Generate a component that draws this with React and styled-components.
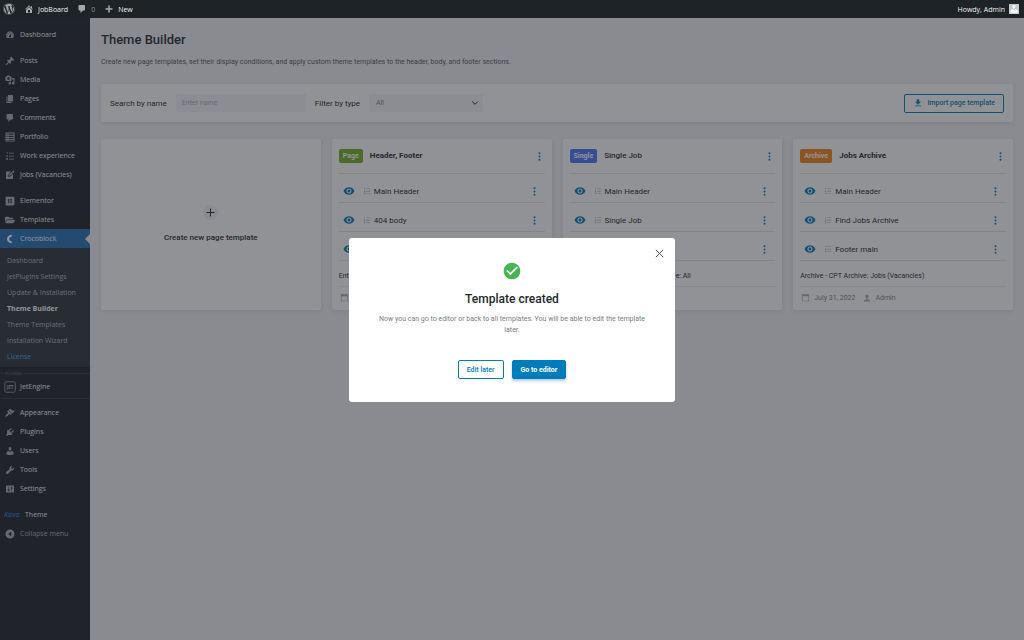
import React from "react";
import styled, { createGlobalStyle, css } from "styled-components";
import { FaWordpress, FaElementor, FaFolderOpen } from "react-icons/fa";
import { MdDownload, MdCheckCircle, MdRemoveRedEye } from "react-icons/md";

const GlobalStyle = createGlobalStyle`
  * {
    box-sizing: border-box;
  }
  body {
    margin: 0;
    background: #f0f0f3;
    color: #23282d;
    font-family: Roboto, "Liberation Sans", sans-serif;
    font-size: 8px;
  }
  button, input, select {
    font-family: inherit;
    margin: 0;
  }
  h1, h2, p, ul {
    margin: 0;
    padding: 0;
  }
  a {
    color: inherit;
    text-decoration: none;
  }
`;

const adminFont = `"Open Sans", "Noto Sans", sans-serif`;

const icons = {
  dashboard:
    "M3.76 16h12.48c1.1-1.37 1.76-3.11 1.76-5 0-4.42-3.58-8-8-8s-8 3.58-8 8c0 1.89.66 3.63 1.76 5zM10 4c.55 0 1 .45 1 1s-.45 1-1 1-1-.45-1-1 .45-1 1-1zM6 6c.55 0 1 .45 1 1s-.45 1-1 1-1-.45-1-1 .45-1 1-1zm8 0c.55 0 1 .45 1 1s-.45 1-1 1-1-.45-1-1 .45-1 1-1zm-5.37 5.55L12 7v6c0 1.1-.9 2-2 2s-2-.9-2-2c0-.57.24-1.08.63-1.45zM4 10c.55 0 1 .45 1 1s-.45 1-1 1-1-.45-1-1 .45-1 1-1zm12 0c.55 0 1 .45 1 1s-.45 1-1 1-1-.45-1-1 .45-1 1-1z",
  home:
    "M16 8.5l1.53 1.53-1.06 1.06L10 4.6l-6.47 6.49-1.06-1.06L10 2.5l4 4v-2h2v4zm-6-2.46l6 5.99V18H4v-5.97zM12 17v-5H8v5h4z",
  plus: "M17 8.5v3h-5.5V17h-3v-5.5H3v-3h5.5V3h3v5.5z",
  posts:
    "M10.44 3.02l1.82-1.82 6.36 6.35-1.83 1.82c-1.05-.68-2.48-.57-3.41.36l-.75.75c-.92.93-1.04 2.35-.35 3.41l-1.83 1.82-2.41-2.41-2.8 2.79c-.42.42-3.38 2.71-3.8 2.29s1.86-3.39 2.28-3.81l2.79-2.79L4.1 9.36l1.83-1.82c1.05.69 2.48.57 3.4-.36l.75-.75c.93-.92 1.05-2.35.36-3.41z",
  media:
    "M13 11V4c0-.55-.45-1-1-1h-1.67L9 1H5L3.67 3H2c-.55 0-1 .45-1 1v7c0 .55.45 1 1 1h10c.55 0 1-.45 1-1zM7 4.5c1.38 0 2.5 1.12 2.5 2.5S8.38 9.5 7 9.5 4.5 8.38 4.5 7 5.62 4.5 7 4.5zM14 6h5v10.5c0 1.38-1.12 2.5-2.5 2.5S14 17.88 14 16.5s1.12-2.5 2.5-2.5c.17 0 .34.02.5.05V9h-3V6zm-4 8.05V13h2v3.5c0 1.38-1.12 2.5-2.5 2.5S7 17.88 7 16.5 8.12 14 9.5 14c.17 0 .34.02.5.05z",
  pages: "M6 15V2h10v13H6zm-1 1h8v2H3V5h2v11z",
  comments:
    "M5 2h9c1.1 0 2 .9 2 2v7c0 1.1-.9 2-2 2h-2l-5 5v-5H5c-1.1 0-2-.9-2-2V4c0-1.1.9-2 2-2z",
  portfolio:
    "M1 1h18v18H1zM3 3v2.5h2V3zm4 0v2.5h10V3zM3 7.5V10h2V7.5zm4 0V10h10V7.5zM3 12v2h2v-2zm4 0v2h10v-2zM3 16v1.5h2V16zm4 0v1.5h10V16z",
  list:
    "M3 2h2v4H4V3H3zM2.5 8h3v2L4 11.500h1.500v1h-3v-1l1.700-1.700V9H2.500zM2.500 14h3v4h-3v-1h2v-.6H3v-.8h1.500V15h-2zM8 3.500h10V5H8zM8 9.500h10V11H8zM8 15.500h10V17H8z",
  jobs:
    "M2 3h10l-5 6-1 5 5-1.500L16 8v10H2zM13.500 3.500L17 1l2 2.500-3 3zM12.700 4.300l2.500 2.500L10.500 11 7.800 12l.8-2.800z",
  appearance:
    "M14.48 11.06L7.41 3.99l1.5-1.5c.5-.56 2.3-.47 3.51.32 1.21.8 1.43 1.28 2.91 2.1 1.18.64 2.45 1.26 4.45.85zm-.71.71L6.7 4.7 4.93 6.47c-.39.39-.39 1.02 0 1.41l1.06 1.06c.39.39.39 1.03 0 1.42-.6.6-1.43 1.11-2.21 1.69-.35.26-.7.53-1.01.84C1.43 14.23.4 16.08 1.4 17.07c.99 1 2.84-.03 4.18-1.36.31-.31.58-.66.85-1.02.57-.78 1.08-1.61 1.69-2.21.39-.39 1.02-.39 1.41 0l1.06 1.06c.39.39 1.02.39 1.41 0z",
  plugins:
    "M13.11 4.36L9.87 7.6 8 5.73l3.24-3.24c.35-.34 1.05-.2 1.56.32.52.51.66 1.21.31 1.55zm-8 1.77l.91-1.12 9.01 9.01-1.19.84c-.71.71-2.63 1.16-3.82 1.16H6.14L4.9 17.26c-.59.59-1.54.59-2.12 0-.59-.58-.59-1.53 0-2.12l1.24-1.24v-3.88c0-1.13.4-3.19 1.09-3.89zm7.26 3.97l3.24-3.24c.34-.35 1.04-.21 1.55.31.52.51.66 1.21.31 1.55l-3.24 3.25z",
  users:
    "M10 9.25c-2.27 0-2.73-3.44-2.73-3.44C7 4.02 7.82 2 9.97 2c2.16 0 2.98 2.02 2.71 3.81 0 0-.41 3.44-2.68 3.44zm0 2.57L12.72 10c2.39 0 4.52 2.33 4.52 4.53v2.49s-3.65 1.13-7.24 1.13c-3.65 0-7.24-1.13-7.24-1.13v-2.49c0-2.25 1.94-4.48 4.47-4.48z",
  tools:
    "M16.68 9.77c-1.34 1.34-3.3 1.67-4.95.99l-5.41 6.52c-.99.99-2.59.99-3.58 0s-.99-2.59 0-3.57l6.52-5.42c-.68-1.65-.35-3.61.99-4.95 1.28-1.28 3.12-1.62 4.72-1.06l-2.89 2.89 2.82 2.82 2.86-2.87c.53 1.58.18 3.39-1.08 4.65z",
  settings:
    "M18 16V4c0-.55-.45-1-1-1H3c-.55 0-1 .45-1 1v12c0 .55.45 1 1 1h14c.55 0 1-.45 1-1zM8 11h1c.55 0 1 .45 1 1s-.45 1-1 1H8v1.5c0 .28-.22.5-.5.5s-.5-.22-.5-.5V13H6c-.55 0-1-.45-1-1s.45-1 1-1h1V5.5c0-.28.22-.5.5-.5s.5.22.5.5V11zm5-2h-1c-.55 0-1-.45-1-1s.45-1 1-1h1V5.5c0-.28.22-.5.5-.5s.5.22.5.5V7h1c.55 0 1 .45 1 1s-.45 1-1 1h-1v5.5c0 .28-.22.5-.5.5s-.5-.22-.5-.5V9z",
  collapse: "M10 1a9 9 0 1 0 0 18 9 9 0 0 0 0-18zM12.5 5v10L6.5 10z",
  croco:
    "M14.5 1.5C8 1.5 4 5 4 10s4 8.5 10.5 8.5l-1.5-4c-3-.3-4.5-2-4.5-4.500s1.500-4.200 4.500-4.500z",
  calendar: "M2 3h3V1.5h1.5V3h7V1.5H15V3h3v15.5H2zM3.5 7v10h13V7z",
  person: "M10 10a4 4 0 1 0 0-8.5 4 4 0 0 0 0 8.5zM8 10.5h4v4h5.5v4h-15v-4H8z"
};

const Icon = ({ name, size = 10 }) => (
  <svg width={size} height={size} viewBox="0 0 20 20" aria-hidden="true">
    <path fill="currentColor" fillRule="evenodd" d={icons[name]} />
  </svg>
);

const AdminBar = styled.header`
  position: sticky;
  top: 0;
  z-index: 20;
  display: flex;
  align-items: center;
  height: 18px;
  padding: 0 5px 0 3px;
  background: #1d2327;
  color: #f0f0f1;
  font-family: ${adminFont};
  font-size: 7px;
  font-weight: 500;
`;

const BarLink = styled.a`
  display: flex;
  align-items: center;
  gap: 4px;
  margin-right: 9px;
  color: ${p => (p.$dim ? "#8c9196" : "inherit")};

  svg {
    color: #a7aaad;
  }
`;

const Account = styled.a`
  display: flex;
  align-items: center;
  gap: 4px;
  margin-left: auto;
`;

const Avatar = styled.span`
  display: flex;
  width: 10px;
  height: 10px;
  background: #c6c9cc;
  color: #fff;
`;

const Layout = styled.div`
  display: flex;
  min-height: calc(100vh - 18px);
`;

const Sidebar = styled.nav`
  flex: 0 0 90px;
  padding-top: 7px;
  background: #1d2327;
  color: #f0f0f1;
  font-family: ${adminFont};
  font-size: 7px;
`;

const MenuGroup = styled.ul`
  list-style: none;
  margin-bottom: ${p => (p.$flush ? 0 : 7)}px;
`;

const MenuLink = styled.a`
  display: flex;
  align-items: center;
  gap: ${p => (p.$logo ? 4 : 5)}px;
  height: 19px;
  padding-left: ${p => (p.$logo ? 4 : 5)}px;
  font-weight: 500;
  white-space: nowrap;
  color: ${p => (p.$dim ? "#a7aaad" : "inherit")};

  svg {
    flex: none;
    color: #a7aaad;
  }

  ${p =>
    p.$active &&
    css`
      position: relative;
      background: #2271b1;
      color: #fff;

      svg {
        color: #fff;
      }

      &::after {
        content: "";
        position: absolute;
        right: 0;
        border: 5px solid transparent;
        border-right-color: #f0f0f3;
        border-left-width: 0;
      }
    `}
`;

const SubMenu = styled.ul`
  list-style: none;
  padding: 4px 0 3px;
  background: #2c3338;
`;

const SubLink = styled.a`
  display: flex;
  align-items: center;
  height: 16px;
  padding-left: 7px;
  white-space: nowrap;
  color: ${p => (p.$accent ? "#4aa3f0" : p.$current ? "#fff" : "#b4b7ba")};
  font-weight: ${p => (p.$current ? 700 : 400)};
`;

const PluginGroup = styled(MenuGroup)`
  position: relative;
  margin-top: 6px;
  margin-bottom: 4px;
  padding: 3px 0 2px;
  border-top: 1px solid #32393f;
  border-bottom: 1px solid #32393f;
`;

const GroupTag = styled.span`
  position: absolute;
  top: -3px;
  left: 4px;
  padding: 0 1px;
  background: #1d2327;
  color: #72777c;
  font-size: 4px;
  line-height: 5px;
  text-transform: uppercase;
`;

const KavaLogo = styled.span`
  width: 17px;
  color: #2271d1;
  font-style: italic;
  font-weight: 600;
`;

const Main = styled.main`
  flex: 1;
  min-width: 0;
  padding: 14px 11px;
`;

const PageTitle = styled.h1`
  font-size: 13px;
  line-height: 16px;
  font-weight: 500;
`;

const Description = styled.p`
  margin-top: 9px;
  font-size: 7px;
  line-height: 10px;
  color: #50575e;
`;

const Panel = styled.section`
  background: #fff;
  border-radius: 2px;
  box-shadow: 0 1px 4px rgba(35, 40, 45, 0.1);
`;

const Filters = styled(Panel)`
  display: flex;
  align-items: center;
  gap: 9px;
  height: 38px;
  margin: 17px 0;
  padding: 0 9px;
`;

const TextInput = styled.input`
  width: 130px;
  height: 18px;
  padding: 0 6px;
  border: 0;
  border-radius: 2px;
  background: #f4f4f6;
  font-size: 7px;

  &::placeholder {
    color: #a9adb5;
  }
`;

const SelectWrap = styled.div`
  position: relative;
  display: flex;
  align-items: center;

  svg {
    position: absolute;
    right: 4px;
    pointer-events: none;
  }
`;

const Select = styled.select`
  appearance: none;
  width: 114px;
  height: 18px;
  padding: 0 7px;
  border: 0;
  border-radius: 2px;
  background: #f4f4f6;
  color: #7b7e81;
  font-size: 7px;
`;

const Button = styled.button`
  display: inline-flex;
  align-items: center;
  justify-content: center;
  gap: 4px;
  height: 19px;
  padding: 0 8px;
  border: 1px solid #007cba;
  border-radius: 2px;
  background: ${p => (p.$primary ? "#007cba" : "#fff")};
  color: ${p => (p.$primary ? "#fff" : "#007cba")};
  font-size: 7px;
  font-weight: ${p => (p.$primary ? 700 : 500)};
  ${p => p.$primary && "box-shadow: 0 2px 3px rgba(0, 80, 130, 0.3);"}
`;

const ImportButton = styled(Button)`
  margin-left: auto;
`;

const Grid = styled.div`
  display: grid;
  grid-template-columns: repeat(4, 1fr);
  gap: 11px;
`;

const CreateCard = styled.button`
  display: flex;
  flex-direction: column;
  align-items: center;
  justify-content: center;
  gap: 13px;
  padding: 0 0 3px;
  border: 0;
  border-radius: 2px;
  background: #fff;
  box-shadow: 0 1px 4px rgba(35, 40, 45, 0.1);
  color: #23282d;
  font-size: 8px;
  font-weight: 500;
`;

const PlusCircle = styled.span`
  display: flex;
  align-items: center;
  justify-content: center;
  width: 15px;
  height: 15px;
  border-radius: 50%;
  background: #f0f0f3;
`;

const Card = styled(Panel)`
  padding: 0 7px;
`;

const CardHead = styled.div`
  display: flex;
  align-items: center;
  gap: 7px;
  height: 35px;
  padding-right: 4px;
  border-bottom: 1px solid #e2e4e8;
`;

const Badge = styled.span`
  height: 14px;
  padding: 0 4px;
  border-radius: 2px;
  background: ${p => p.color};
  color: #fff;
  font-size: 7px;
  line-height: 14px;
  font-weight: 700;
`;

const CardTitle = styled.h2`
  font-size: 8px;
  line-height: 12px;
  font-weight: ${p => (p.$light ? 500 : 700)};
`;

const Row = styled.div`
  display: flex;
  align-items: center;
  height: 29px;
  padding: 6px 9px 0 4px;
  border-bottom: 1px solid #e2e4e8;
`;

const RowName = styled.span`
  display: flex;
  align-items: center;
  gap: 3px;
  margin-left: 8px;

  svg {
    color: #a7aaad;
  }
`;

const IconButton = styled.button`
  display: flex;
  padding: 0;
  border: 0;
  background: none;
  color: ${p => p.color || "#007cba"};
  ${p => p.$end && "margin-left: auto;"}
`;

const Conditions = styled.p`
  height: 26px;
  padding-top: 10px;
  border-bottom: 1px solid #e9eaed;
  font-size: 7px;
  line-height: 10px;
  white-space: nowrap;
`;

const Meta = styled.div`
  display: flex;
  align-items: center;
  gap: 4px;
  height: 23px;
  padding: 0 0 2px 1px;
  color: #7b7e81;
  font-size: 7px;

  span {
    margin-right: 4px;
  }
  svg {
    color: #a7aaad;
  }
`;

const Overlay = styled.div`
  position: fixed;
  inset: 0;
  z-index: 10;
  display: flex;
  align-items: center;
  justify-content: center;
  background: rgba(35, 38, 45, 0.5);
`;

const Modal = styled.div`
  position: relative;
  width: 326px;
  padding: 23px 24px;
  border-radius: 3px;
  background: #fff;
  text-align: center;
`;

const ModalIcon = styled.div`
  display: flex;
  justify-content: center;
  color: #46b450;
`;

const ModalTitle = styled.h2`
  margin-top: 11px;
  font-size: 12px;
  line-height: 14px;
  font-weight: 500;
`;

const ModalText = styled.p`
  margin-top: 8px;
  font-size: 7px;
  line-height: 11px;
  color: #7b7e81;
`;

const ModalActions = styled.div`
  display: flex;
  justify-content: center;
  gap: 8px;
  margin-top: 24px;
`;

const CloseButton = styled(IconButton)`
  position: absolute;
  top: 11px;
  right: 11px;
`;

const Kebab = () => (
  <svg width="3" height="9" viewBox="0 0 3 9" fill="currentColor" aria-hidden="true">
    <circle cx="1.5" cy="1.2" r="1" />
    <circle cx="1.5" cy="4.5" r="1" />
    <circle cx="1.5" cy="7.8" r="1" />
  </svg>
);

const JetIcon = () => (
  <svg width="12" height="12" viewBox="0 0 24 24" aria-hidden="true">
    <rect x="1.5" y="1.5" width="21" height="21" rx="3" fill="none" stroke="currentColor" strokeWidth="1.5" />
    <text x="12" y="15" textAnchor="middle" fill="currentColor" fontSize="9" fontWeight="700">
      JET
    </text>
  </svg>
);

const menuGroups = [
  [["Dashboard", "dashboard"]],
  [
    ["Posts", "posts"],
    ["Media", "media"],
    ["Pages", "pages"],
    ["Comments", "comments"],
    ["Portfolio", "portfolio"],
    ["Work experience", "list"],
    ["Jobs (Vacancies)", "jobs"]
  ]
];

const subItems = [
  "Dashboard",
  "JetPlugins Settings",
  "Update & Installation",
  "Theme Builder",
  "Theme Templates",
  "Installation Wizard",
  "License"
];

const lowerItems = [
  ["Appearance", "appearance"],
  ["Plugins", "plugins"],
  ["Users", "users"],
  ["Tools", "tools"],
  ["Settings", "settings"]
];

const cards = [
  {
    type: "Page",
    color: "#72b31e",
    title: "Header, Footer",
    rows: ["Main Header", "404 body", "Footer main"],
    conditions: "Entire Site"
  },
  {
    type: "Single",
    color: "#4a76fb",
    title: "Single Job",
    light: true,
    rows: ["Main Header", "Single Job", "Footer main"],
    conditions: "Singular - Jobs (Vacancies) Archive: All"
  },
  {
    type: "Archive",
    color: "#f28312",
    title: "Jobs Archive",
    rows: ["Main Header", "Find Jobs Archive", "Footer main"],
    conditions: "Archive - CPT Archive: Jobs (Vacancies)"
  }
];

const MenuItem = ({ label, icon, dim }) => (
  <li>
    <MenuLink href="#" $dim={dim}>
      <Icon name={icon} />
      {label}
    </MenuLink>
  </li>
);

const TemplateCard = ({ card }) => (
  <Card>
    <CardHead>
      <Badge color={card.color}>{card.type}</Badge>
      <CardTitle $light={card.light}>{card.title}</CardTitle>
      <IconButton $end aria-label="Template actions">
        <Kebab />
      </IconButton>
    </CardHead>
    {card.rows.map(row => (
      <Row key={row}>
        <IconButton aria-label="Preview">
          <MdRemoveRedEye size={12} />
        </IconButton>
        <RowName>
          <Icon name="list" size={8} />
          {row}
        </RowName>
        <IconButton $end aria-label="Part actions">
          <Kebab />
        </IconButton>
      </Row>
    ))}
    <Conditions>{card.conditions}</Conditions>
    <Meta>
      <Icon name="calendar" size={9} />
      <span>July 31, 2022</span>
      <Icon name="person" size={8} />
      <span>Admin</span>
    </Meta>
  </Card>
);

const App = () => (
  <>
    <GlobalStyle />
    <AdminBar>
      <BarLink href="#" aria-label="WordPress">
        <FaWordpress size={12} />
      </BarLink>
      <BarLink href="#">
        <Icon name="home" />
        JobBoard
      </BarLink>
      <BarLink href="#" $dim>
        <Icon name="comments" />
        0
      </BarLink>
      <BarLink href="#">
        <Icon name="plus" />
        New
      </BarLink>
      <Account href="#">
        Howdy, Admin
        <Avatar>
          <Icon name="users" />
        </Avatar>
      </Account>
    </AdminBar>
    <Layout>
      <Sidebar>
        {menuGroups.map((group, i) => (
          <MenuGroup key={i}>
            {group.map(([label, icon]) => (
              <MenuItem key={label} label={label} icon={icon} />
            ))}
          </MenuGroup>
        ))}
        <MenuGroup $flush>
          <li>
            <MenuLink href="#">
              <FaElementor size={10} />
              Elementor
            </MenuLink>
          </li>
          <li>
            <MenuLink href="#">
              <FaFolderOpen size={10} />
              Templates
            </MenuLink>
          </li>
          <li>
            <MenuLink href="#" $active>
              <Icon name="croco" />
              Crocoblock
            </MenuLink>
            <SubMenu>
              {subItems.map(item => (
                <li key={item}>
                  <SubLink
                    href="#"
                    $current={item === "Theme Builder"}
                    $accent={item === "License"}
                  >
                    {item}
                  </SubLink>
                </li>
              ))}
            </SubMenu>
          </li>
        </MenuGroup>
        <PluginGroup>
          <li>
            <GroupTag>Plugins</GroupTag>
            <MenuLink href="#" $logo>
              <JetIcon />
              JetEngine
            </MenuLink>
          </li>
        </PluginGroup>
        <MenuGroup>
          {lowerItems.map(([label, icon]) => (
            <MenuItem key={label} label={label} icon={icon} />
          ))}
        </MenuGroup>
        <MenuGroup>
          <li>
            <MenuLink href="#" $logo>
              <KavaLogo>Kava</KavaLogo>
              Theme
            </MenuLink>
          </li>
          <MenuItem label="Collapse menu" icon="collapse" dim />
        </MenuGroup>
      </Sidebar>
      <Main>
        <PageTitle>Theme Builder</PageTitle>
        <Description>
          Create new page templates, set their display conditions, and apply
          custom theme templates to the header, body, and footer sections.
        </Description>
        <Filters>
          <label htmlFor="search">Search by name</label>
          <TextInput id="search" placeholder="Enter name" />
          <label htmlFor="type">Filter by type</label>
          <SelectWrap>
            <Select id="type">
              <option>All</option>
            </Select>
            <svg width="8" height="8" viewBox="0 0 8 8" fill="none" stroke="#23282d" aria-hidden="true">
              <path d="M1.2 2.5L4 5.3l2.8-2.8" />
            </svg>
          </SelectWrap>
          <ImportButton>
            <MdDownload size={10} />
            Import page template
          </ImportButton>
        </Filters>
        <Grid>
          <CreateCard>
            <PlusCircle>
              <svg width="9" height="9" viewBox="0 0 9 9" stroke="#23282d" aria-hidden="true">
                <path d="M4.5 .5v8M.5 4.5h8" />
              </svg>
            </PlusCircle>
            Create new page template
          </CreateCard>
          {cards.map(card => (
            <TemplateCard key={card.type} card={card} />
          ))}
        </Grid>
      </Main>
    </Layout>
    <Overlay>
      <Modal role="dialog" aria-labelledby="modal-title">
        <CloseButton color="#50575e" aria-label="Close">
          <svg width="9" height="9" viewBox="0 0 9 9" stroke="currentColor" aria-hidden="true">
            <path d="M.8.8l7.4 7.4M8.2.8L.8 8.2" />
          </svg>
        </CloseButton>
        <ModalIcon>
          <MdCheckCircle size={20} />
        </ModalIcon>
        <ModalTitle id="modal-title">Template created</ModalTitle>
        <ModalText>
          Now you can go to editor or back to all templates. You will be able to
          edit the template later.
        </ModalText>
        <ModalActions>
          <Button>Edit later</Button>
          <Button $primary>Go to editor</Button>
        </ModalActions>
      </Modal>
    </Overlay>
  </>
);

export default App;
